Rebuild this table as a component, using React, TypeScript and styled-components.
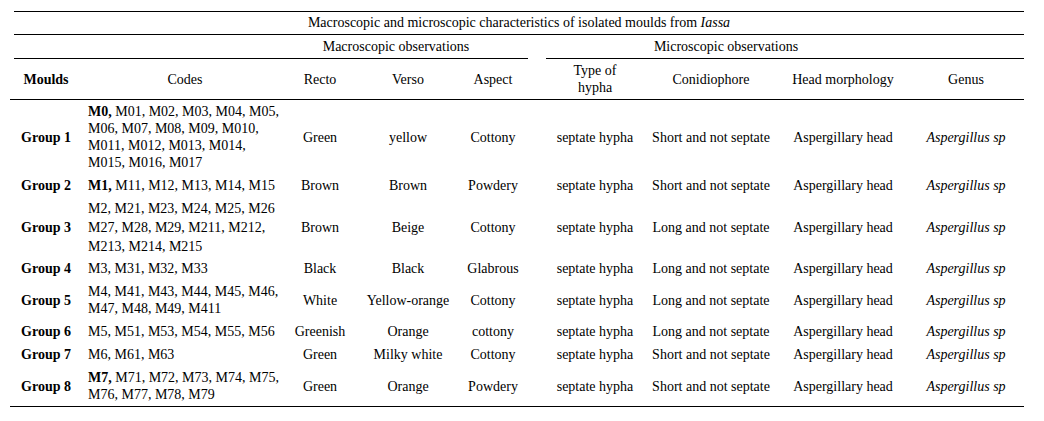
import styled, { createGlobalStyle } from "styled-components";

const GlobalStyle = createGlobalStyle`
  body {
    margin: 0;
    background: #ffffff;
  }
`;

const Page = styled.div`
  padding: 11px 0 0 10px;
  font-family: "Liberation Serif", "Times New Roman", serif;
  font-size: 14px;
  color: #000;
`;

const Table = styled.div`
  width: 1014px;
  border-bottom: 1px solid #000;
`;

const Caption = styled.div`
  margin-left: 4px;
  height: 22px;
  line-height: 22px;
  text-align: center;
  border-top: 1px solid #000;
  border-bottom: 1px solid #000;
  white-space: nowrap;
`;

const SpanRow = styled.div`
  display: flex;
`;

const SpanBlock = styled.div<{ $offset: number; $width: number; $padL?: number; $padR?: number }>`
  box-sizing: border-box;
  margin-left: ${(p) => p.$offset}px;
  width: ${(p) => p.$width}px;
  padding-left: ${(p) => p.$padL ?? 0}px;
  padding-right: ${(p) => p.$padR ?? 0}px;
  height: 24px;
  line-height: 23px;
  text-align: center;
  border-bottom: 1px solid #000;
  white-space: nowrap;
`;

const Row = styled.div<{ $lh?: number; $my?: number; $head?: boolean }>`
  --cell-my: ${(p) => p.$my ?? 3}px;
  display: grid;
  grid-template-columns: 72px 200px 76px 100px 70px 124px 118px 146px 108px;
  line-height: ${(p) => p.$lh ?? 17}px;
  ${(p) => (p.$head ? "height: 40px; border-bottom: 1px solid #000;" : "")}
`;

const colPad = ["0 0", "0 0 0 6px", "0 0", "0 0", "0 0", "0 0 0 10px", "0 0", "0 0", "0 8px 0 0"];

const Cell = styled.div<{ $col: number; $left?: boolean; $bold?: boolean; $italic?: boolean }>`
  display: flex;
  flex-direction: column;
  justify-content: center;
  align-items: ${(p) => (p.$left ? "flex-start" : "center")};
  text-align: ${(p) => (p.$left ? "left" : "center")};
  padding: ${(p) => colPad[p.$col]};
  margin: var(--cell-my) 0;
  font-weight: ${(p) => (p.$bold ? "bold" : "normal")};
  font-style: ${(p) => (p.$italic ? "italic" : "normal")};
  white-space: nowrap;
`;

const Line = styled.span`
  display: block;
`;

type Group = {
  name: string;
  lead?: string;
  codes: string[];
  recto: string;
  verso: string;
  aspect: string;
  conidiophore: string;
  lh?: number;
  my?: number;
};

const groups: Group[] = [
  {
    name: "Group 1",
    lead: "M0,",
    codes: [" M01, M02, M03, M04, M05,", "M06, M07, M08, M09, M010,", "M011, M012, M013, M014,", "M015, M016, M017"],
    recto: "Green",
    verso: "yellow",
    aspect: "Cottony",
    conidiophore: "Short and not septate",
  },
  {
    name: "Group 2",
    lead: "M1,",
    codes: [" M11, M12, M13, M14, M15"],
    recto: "Brown",
    verso: "Brown",
    aspect: "Powdery",
    conidiophore: "Short and not septate",
  },
  {
    name: "Group 3",
    codes: ["M2, M21, M23, M24, M25, M26", "M27, M28, M29, M211, M212,", "M213, M214, M215"],
    recto: "Brown",
    verso: "Beige",
    aspect: "Cottony",
    conidiophore: "Long and not septate",
    lh: 19,
    my: 1.5,
  },
  {
    name: "Group 4",
    codes: ["M3, M31, M32, M33"],
    recto: "Black",
    verso: "Black",
    aspect: "Glabrous",
    conidiophore: "Long and not septate",
  },
  {
    name: "Group 5",
    codes: ["M4, M41, M43, M44, M45, M46,", "M47, M48, M49, M411"],
    recto: "White",
    verso: "Yellow-orange",
    aspect: "Cottony",
    conidiophore: "Long and not septate",
  },
  {
    name: "Group 6",
    codes: ["M5, M51, M53, M54, M55, M56"],
    recto: "Greenish",
    verso: "Orange",
    aspect: "cottony",
    conidiophore: "Long and not septate",
  },
  {
    name: "Group 7",
    codes: ["M6, M61, M63"],
    recto: "Green",
    verso: "Milky white",
    aspect: "Cottony",
    conidiophore: "Short and not septate",
  },
  {
    name: "Group 8",
    lead: "M7,",
    codes: [" M71, M72, M73, M74, M75,", "M76, M77, M78, M79"],
    recto: "Green",
    verso: "Orange",
    aspect: "Powdery",
    conidiophore: "Short and not septate",
  },
];

export default function App() {
  return (
    <Page>
      <GlobalStyle />
      <Table>
        <Caption>
          Macroscopic and microscopic characteristics of isolated moulds from <i>Iassa</i>
        </Caption>
        <SpanRow>
          <SpanBlock $offset={4} $width={514} $padL={250}>
            Macroscopic observations
          </SpanBlock>
          <SpanBlock $offset={18} $width={478} $padR={118}>
            Microscopic observations
          </SpanBlock>
        </SpanRow>
        <Row $head>
          <Cell $col={0} $bold>Moulds</Cell>
          <Cell $col={1}>Codes</Cell>
          <Cell $col={2}>Recto</Cell>
          <Cell $col={3}>Verso</Cell>
          <Cell $col={4}>Aspect</Cell>
          <Cell $col={5}>
            <Line>Type of</Line>
            <Line>hypha</Line>
          </Cell>
          <Cell $col={6}>Conidiophore</Cell>
          <Cell $col={7}>Head morphology</Cell>
          <Cell $col={8}>Genus</Cell>
        </Row>
        {groups.map((g) => (
          <Row key={g.name} $lh={g.lh} $my={g.my}>
            <Cell $col={0} $bold>{g.name}</Cell>
            <Cell $col={1} $left>
              {g.codes.map((c, i) => (
                <Line key={i}>
                  {i === 0 && g.lead ? <b>{g.lead}</b> : null}
                  {c}
                </Line>
              ))}
            </Cell>
            <Cell $col={2}>{g.recto}</Cell>
            <Cell $col={3}>{g.verso}</Cell>
            <Cell $col={4}>{g.aspect}</Cell>
            <Cell $col={5}>septate hypha</Cell>
            <Cell $col={6}>{g.conidiophore}</Cell>
            <Cell $col={7}>Aspergillary head</Cell>
            <Cell $col={8} $italic>Aspergillus sp</Cell>
          </Row>
        ))}
      </Table>
    </Page>
  );
}
